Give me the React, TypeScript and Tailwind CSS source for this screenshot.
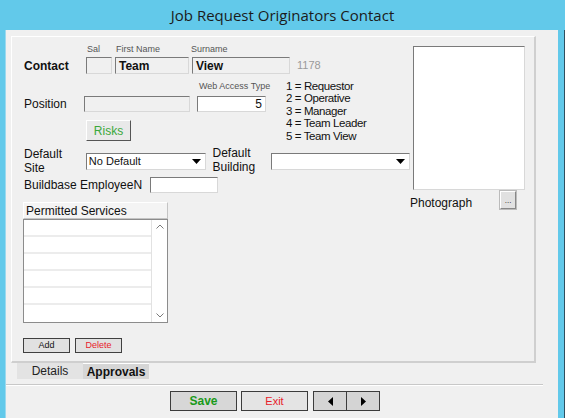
import React from "react";

const sans = "font-['Liberation_Sans',Arial,sans-serif]";

function Sunken({ className = "", children }: { className?: string; children?: React.ReactNode }) {
  return (
    <div
      className={`border border-t-[#7a7a7a] border-l-[#7a7a7a] border-r-[#d8d8d8] border-b-[#d8d8d8] ${className}`}
    >
      {children}
    </div>
  );
}

function Caret() {
  return (
    <svg width="9" height="5" viewBox="0 0 9 5" className="mr-[4px]">
      <path d="M0 0h9L4.5 5z" fill="#000" />
    </svg>
  );
}

export default function App() {
  const legend = ["1 = Requestor", "2 = Operative", "3 = Manager", "4 = Team Leader", "5 = Team View"];

  return (
    <div className={`w-[565px] h-[418px] bg-[#62c9ea] flex flex-col overflow-hidden ${sans}`}>
      {/* title */}
      <div className="h-[30px] flex items-center justify-center text-[15px] text-[#1b1b1b] font-['Open_Sans',sans-serif] pt-[1px]">
        Job Request Originators Contact
      </div>

      <div className="flex-1 flex">
        <div className="w-[5px]" />
        <div className="w-[1px] bg-[#9ad9ef]" />
        <div className="flex-1 bg-[#f0f0f0] flex flex-col">
          {/* panel */}
          <div className="pl-[5px] pt-[6px]">
            <div className="w-[525px] h-[327px] border-l border-t border-white border-r-2 border-b-2 border-r-[#cfcfcf] border-b-[#cfcfcf] flex text-[12px] text-[#111]">
              {/* left column */}
              <div className="w-[398px] flex flex-col">
                {/* field captions */}
                <div className="h-[12px] mt-[6px] flex text-[9px] text-[#555] leading-[12px]">
                  <span className="ml-[75px] w-[29px]">Sal</span>
                  <span className="w-[75px]">First Name</span>
                  <span>Surname</span>
                </div>
                {/* contact row */}
                <div className="h-[17px] mt-[2px] flex items-center">
                  <span className="ml-[12px] w-[62px] font-bold text-[12px]">Contact</span>
                  <Sunken className="w-[26px] h-[17px] bg-[#f0f0f0]" />
                  <Sunken className="ml-[3px] w-[74px] h-[17px] bg-[#f0f0f0] flex items-center pl-[3px] font-bold text-[12px]">
                    Team
                  </Sunken>
                  <Sunken className="ml-[3px] w-[98px] h-[17px] bg-[#f0f0f0] flex items-center pl-[3px] font-bold text-[12px]">
                    View
                  </Sunken>
                  <span className="ml-[7px] text-[11px] text-[#9a9a9a]">1178</span>
                </div>

                <div className="flex">
                  <div className="w-[270px] flex flex-col">
                    <div className="h-[12px] mt-[6px] ml-[187px] text-[9px] text-[#555] leading-[12px]">
                      Web Access Type
                    </div>
                    <div className="h-[16px] mt-[4px] flex items-center">
                      <span className="ml-[12px] w-[60px]">Position</span>
                      <Sunken className="w-[106px] h-[16px] bg-[#f0f0f0]" />
                      <Sunken className="ml-[7px] w-[69px] h-[16px] bg-white flex items-center justify-end pr-[3px]">
                        5
                      </Sunken>
                    </div>
                    <button className="mt-[8px] ml-[74px] w-[45px] h-[21px] bg-[#e9e9e9] border border-t-white border-l-white border-r-[#555] border-b-[#555] text-[#3aa83a] text-[12px] flex items-center justify-center">
                      Risks
                    </button>
                  </div>
                  <div className="ml-[4px] mt-[6px] flex flex-col text-[11.5px] leading-[12.4px] tracking-[-0.4px] text-[#111]">
                    {legend.map((l) => (
                      <span key={l}>{l}</span>
                    ))}
                  </div>
                </div>

                {/* defaults row */}
                <div className="mt-[5px] flex">
                  <div className="ml-[12px] w-[62px] leading-[14px]">
                    Default
                    <br />
                    Site
                  </div>
                  <Sunken className="mt-[6px] w-[120px] h-[17px] bg-white flex items-center justify-between pl-[2px] text-[11px]">
                    <span>No Default</span>
                    <Caret />
                  </Sunken>
                  <div className="ml-[7px] w-[59px] leading-[14px] -mt-[1px]">
                    Default
                    <br />
                    Building
                  </div>
                  <Sunken className="mt-[6px] w-[139px] h-[17px] bg-white flex items-center justify-end">
                    <Caret />
                  </Sunken>
                </div>

                {/* buildbase */}
                <div className="mt-[2px] h-[16px] flex items-center">
                  <span className="ml-[12px] w-[126px]">Buildbase EmployeeN</span>
                  <Sunken className="w-[68px] h-[16px] bg-white" />
                </div>

                {/* permitted services */}
                <div className="mt-[9px] ml-[11px] w-[145px] flex flex-col">
                  <div className="h-[17px] bg-[#f4f4f4] border-t border-l border-white border-r border-b border-r-[#c4c4c4] border-b-[#c4c4c4] flex items-center pl-[2px]">
                    Permitted Services
                  </div>
                  <div className="h-[104px] bg-white border border-[#8c8c8c] flex">
                    <div className="flex-1 flex flex-col">
                      {[0, 1, 2, 3, 4].map((i) => (
                        <div key={i} className="h-[17px] border-b-2 border-[#ececec]" />
                      ))}
                    </div>
                    <div className="w-[16px] border-l border-[#e2e2e2] flex flex-col justify-between items-center py-[4px]">
                      <svg width="8" height="5" viewBox="0 0 8 5">
                        <path d="M0.5 4.5L4 1l3.5 3.5" stroke="#7a7a7a" fill="none" />
                      </svg>
                      <svg width="8" height="5" viewBox="0 0 8 5">
                        <path d="M0.5 0.5L4 4l3.5-3.5" stroke="#7a7a7a" fill="none" />
                      </svg>
                    </div>
                  </div>
                </div>

                {/* add / delete */}
                <div className="mt-[15px] ml-[11px] flex gap-[5px]">
                  <button className="w-[47px] h-[15px] bg-[#e1e1e1] border border-[#404040] text-[9px] leading-none flex items-center justify-center">
                    Add
                  </button>
                  <button className="w-[47px] h-[15px] bg-[#e1e1e1] border border-[#404040] text-[9px] text-[#e8202a] leading-none flex items-center justify-center">
                    Delete
                  </button>
                </div>
              </div>

              {/* photo column */}
              <div className="flex flex-col">
                <Sunken className="mt-[9px] ml-[3px] w-[112px] h-[144px] bg-white" />
                <div className="flex items-start">
                  <span className="mt-[4px] text-[12px]">Photograph</span>
                  <div className="ml-[28px] mt-[1px] w-[16px] h-[18px] bg-[#e1e1e1] border border-t-white border-l-white border-r-[#888] border-b-[#888] outline outline-1 outline-[#bbb] text-[8px] flex items-end justify-center pb-[3px] leading-none">
                    ...
                  </div>
                </div>
              </div>
            </div>
          </div>

          {/* tabs */}
          <div className="ml-[11px] flex h-[16px] text-[12px]">
            <div className="w-[66px] bg-[#e3e3e3] flex items-center justify-center text-[#222]">Details</div>
            <div className="w-[66px] bg-[#d6d6d6] border-t border-white flex items-center justify-center font-bold text-[#111]">
              Approvals
            </div>
          </div>

          {/* divider */}
          <div className="mt-[5px] w-[537px] h-[1px] bg-[#c8c8c8]" />
          <div className="w-[537px] h-[1px] bg-white" />

          {/* bottom buttons */}
          <div className="mt-[5px] ml-[164px] flex gap-[4px]">
            <button className="w-[67px] h-[20px] bg-[#d7d7d7] border border-[#3c3c3c] font-bold text-[12px] text-[#1a9a1a] flex items-center justify-center">
              Save
            </button>
            <button className="w-[67px] h-[20px] bg-[#e4e4e4] border border-[#3c3c3c] text-[11px] text-[#e8202a] flex items-center justify-center">
              Exit
            </button>
            <div className="ml-[1px] w-[67px] h-[20px] border border-[#3c3c3c] flex bg-[#d4d4d4]">
              <div className="flex-1 flex items-center justify-center border-r border-[#3c3c3c]">
                <svg width="5" height="9" viewBox="0 0 5 9">
                  <path d="M5 0v9L0 4.5z" fill="#000" />
                </svg>
              </div>
              <div className="flex-1 flex items-center justify-center">
                <svg width="5" height="9" viewBox="0 0 5 9">
                  <path d="M0 0v9l5-4.5z" fill="#000" />
                </svg>
              </div>
            </div>
          </div>
        </div>
        <div className="w-[6px]" />
        <div className="w-[1px] bg-[#2f4f5f]" />
      </div>
    </div>
  );
}
